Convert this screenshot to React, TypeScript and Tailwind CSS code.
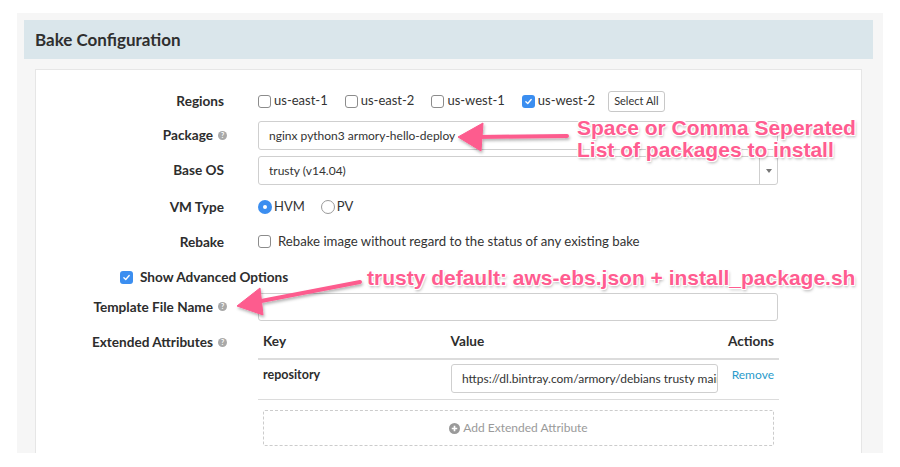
import React from "react";

const font = { fontFamily: "Lato, 'Noto Sans', sans-serif" };

function Check({ on = false }: { on?: boolean }) {
  if (on) {
    return (
      <span className="inline-flex h-[13px] w-[13px] shrink-0 items-center justify-center rounded-[3px] bg-[#3b8ef0]">
        <svg viewBox="0 0 12 12" className="h-[9px] w-[9px]">
          <path d="M2.5 6.2 L5 8.6 L9.6 3.4" fill="none" stroke="white" strokeWidth="1.8" strokeLinecap="round" strokeLinejoin="round" />
        </svg>
      </span>
    );
  }
  return <span className="inline-block h-[13px] w-[13px] shrink-0 rounded-[3px] border border-[#8c8c8c] bg-white" />;
}

function Radio({ on = false }: { on?: boolean }) {
  if (on) {
    return (
      <span className="inline-flex h-[14px] w-[14px] shrink-0 items-center justify-center rounded-full bg-[#3b8ef0]">
        <span className="h-[4px] w-[4px] rounded-full bg-white" />
      </span>
    );
  }
  return <span className="inline-block h-[14px] w-[14px] shrink-0 rounded-full border border-[#9a9a9a] bg-white" />;
}

function Help() {
  return (
    <span className="ml-[5px] -mr-[3px] inline-flex h-[9px] w-[9px] items-center justify-center rounded-full bg-[#a9a9a9] text-[7px] font-bold leading-none text-white">
      ?
    </span>
  );
}

function Label({ children, help = false }: { children: React.ReactNode; help?: boolean }) {
  return (
    <div className="flex w-[188px] shrink-0 items-center justify-end text-[13.6px] font-bold text-[#2d2d2d]">
      {children}
      {help && <Help />}
    </div>
  );
}

function Region({ name, on = false }: { name: string; on?: boolean }) {
  return (
    <label className="mr-[17px] flex items-center gap-[3px]">
      <Check on={on} />
      <span>{name}</span>
    </label>
  );
}

const pinkText =
  "absolute whitespace-nowrap font-bold leading-[22px] text-[#ff5c90] [text-shadow:0_0_2px_white,1px_1px_0_white,-1px_-1px_0_white,1px_-1px_0_white,-1px_1px_0_white,1px_2px_3px_rgba(0,0,0,0.35)]";

export default function App() {
  return (
    <div className="relative h-[467px] w-[900px] overflow-hidden bg-white text-[#333]" style={font}>
      <div className="ml-[17px] mt-[13px] h-[440px] w-[866px] overflow-hidden bg-[#f6f6f6] pl-[7px] pr-[10px] pt-[7px]">
        <div className="flex h-[39px] items-center bg-[#dae6eb] pl-[11px] text-[17px] font-bold text-[#2f2f2f]">
          Bake Configuration
        </div>
        <div className="mx-[11px] mt-[10px] h-[400px] border border-[#e6e6e6] bg-white pt-[18px]">
          {/* Regions */}
          <div className="flex h-[26px] items-center">
            <Label>Regions</Label>
            <div className="ml-[34px] flex items-center text-[13px]">
              <Region name="us-east-1" />
              <Region name="us-east-2" />
              <Region name="us-west-1" />
              <Region name="us-west-2" on />
              <button className="-ml-[4px] h-[21px] rounded-[3px] border border-[#c8c8c8] bg-white px-[5px] text-[11px] text-[#333]">
                Select All
              </button>
            </div>
          </div>

          {/* Package */}
          <div className="mt-[7px] flex h-[29px] items-center">
            <Label help>Package</Label>
            <input
              readOnly
              value="nginx python3 armory-hello-deploy"
              className="ml-[34px] h-full w-[520px] rounded-[3px] border border-[#cfcfcf] pl-[10px] text-[12px] text-[#333] outline-none"
            />
          </div>

          {/* Base OS */}
          <div className="mt-[6px] flex h-[29px] items-center">
            <Label>Base OS</Label>
            <div className="ml-[34px] flex h-full w-[520px] items-center rounded-[3px] border border-[#cfcfcf] text-[12px] text-[#333]">
              <span className="flex-1 pl-[10px]">trusty (v14.04)</span>
              <span className="flex h-full w-[18px] items-center justify-center border-l border-[#cfcfcf]">
                <span className="h-0 w-0 border-x-[3px] border-t-[4px] border-x-transparent border-t-[#777]" />
              </span>
            </div>
          </div>

          {/* VM Type */}
          <div className="mt-[8px] flex h-[28px] items-center">
            <Label>VM Type</Label>
            <div className="ml-[34px] flex items-center text-[13px]">
              <Radio on />
              <span className="ml-[2px]">HVM</span>
              <span className="ml-[16px] flex">
                <Radio />
              </span>
              <span className="ml-[2px]">PV</span>
            </div>
          </div>

          {/* Rebake */}
          <div className="mt-[7px] flex h-[28px] items-center">
            <Label>Rebake</Label>
            <div className="ml-[34px] flex items-center gap-[7px] text-[13.2px]">
              <Check />
              <span>Rebake image without regard to the status of any existing bake</span>
            </div>
          </div>

          {/* Advanced */}
          <div className="mt-[9px] flex h-[24px] items-center pl-[84px] text-[13.6px] font-bold text-[#2d2d2d]">
            <Check on />
            <span className="ml-[7px]">Show Advanced Options</span>
          </div>

          {/* Template */}
          <div className="mt-[4px] flex h-[28px] items-center">
            <Label help>Template File Name</Label>
            <input readOnly className="ml-[34px] h-full w-[520px] rounded-[3px] border border-[#cfcfcf] outline-none" />
          </div>

          {/* Extended attributes */}
          <div className="mt-[6px] flex">
            <div className="flex h-[31px] items-center">
              <Label help>Extended Attributes</Label>
            </div>
            <div className="ml-[34px] w-[521px]">
              <div className="flex h-[33px] items-center border-b-2 border-[#dcdcdc] pb-[2px] text-[13.6px] font-bold text-[#2d2d2d]">
                <span className="w-[188px] px-[5px]">Key</span>
                <span className="w-[283px] px-[5px]">Value</span>
                <span className="flex-1 pr-[5px] text-right">Actions</span>
              </div>
              <div className="flex h-[40px] border-b border-[#dcdcdc] pt-[4px]">
                <span className="w-[188px] px-[5px] pt-[2px] text-[12.5px] font-bold text-[#2d2d2d]">repository</span>
                <div className="w-[283px] pl-[5px] pr-[11px]">
                  <input
                    readOnly
                    value="https://dl.bintray.com/armory/debians trusty main"
                    className="h-[29px] w-full rounded-[3px] border border-[#cfcfcf] pl-[10px] text-[12px] text-[#333] outline-none"
                  />
                </div>
                <span className="flex-1 pr-[5px] pt-[2px] text-right text-[12px] text-[#2a9bcb]">Remove</span>
              </div>
              <div className="mx-[5px] mt-[10px] flex h-[36px] items-center justify-center rounded-[2px] border border-dashed border-[#cccccc] text-[12px] text-[#9a9a9a]">
                <svg viewBox="0 0 16 16" className="mr-[3px] h-[11px] w-[11px]">
                  <circle cx="8" cy="8" r="8" fill="#9a9a9a" />
                  <path d="M8 4v8M4 8h8" stroke="white" strokeWidth="2.4" />
                </svg>
                Add Extended Attribute
              </div>
            </div>
          </div>
        </div>
      </div>

      {/* annotations */}
      <svg className="pointer-events-none absolute left-0 top-0" width="900" height="467">
        <defs>
          <filter id="sh" x="-20%" y="-50%" width="140%" height="200%">
            <feDropShadow dx="1" dy="2" stdDeviation="1.5" floodColor="#000" floodOpacity="0.3" />
          </filter>
        </defs>
        <g fill="#fd5b8e" stroke="#fd5b8e" filter="url(#sh)">
          <line x1="567" y1="136" x2="476" y2="137" strokeWidth="4" strokeLinecap="round" />
          <polygon points="458,137 483,123 481,151" strokeWidth="1" strokeLinejoin="round" />
          <line x1="360" y1="282" x2="256" y2="302" strokeWidth="4" strokeLinecap="round" />
          <polygon points="237,306 260,288 263,315" strokeWidth="1" strokeLinejoin="round" />
        </g>
      </svg>
      <div className={pinkText + " left-[577px] top-[117px] text-[21px]"} style={{ fontFamily: "'Liberation Sans', Arial, sans-serif" }}>
        <div>Space or Comma Seperated</div>
        <div>List of packages to install</div>
      </div>
      <div className={pinkText + " left-[367px] top-[267px] text-[21px]"} style={{ fontFamily: "'Liberation Sans', Arial, sans-serif" }}>
        trusty default: aws-ebs.json + install_package.sh
      </div>
    </div>
  );
}
